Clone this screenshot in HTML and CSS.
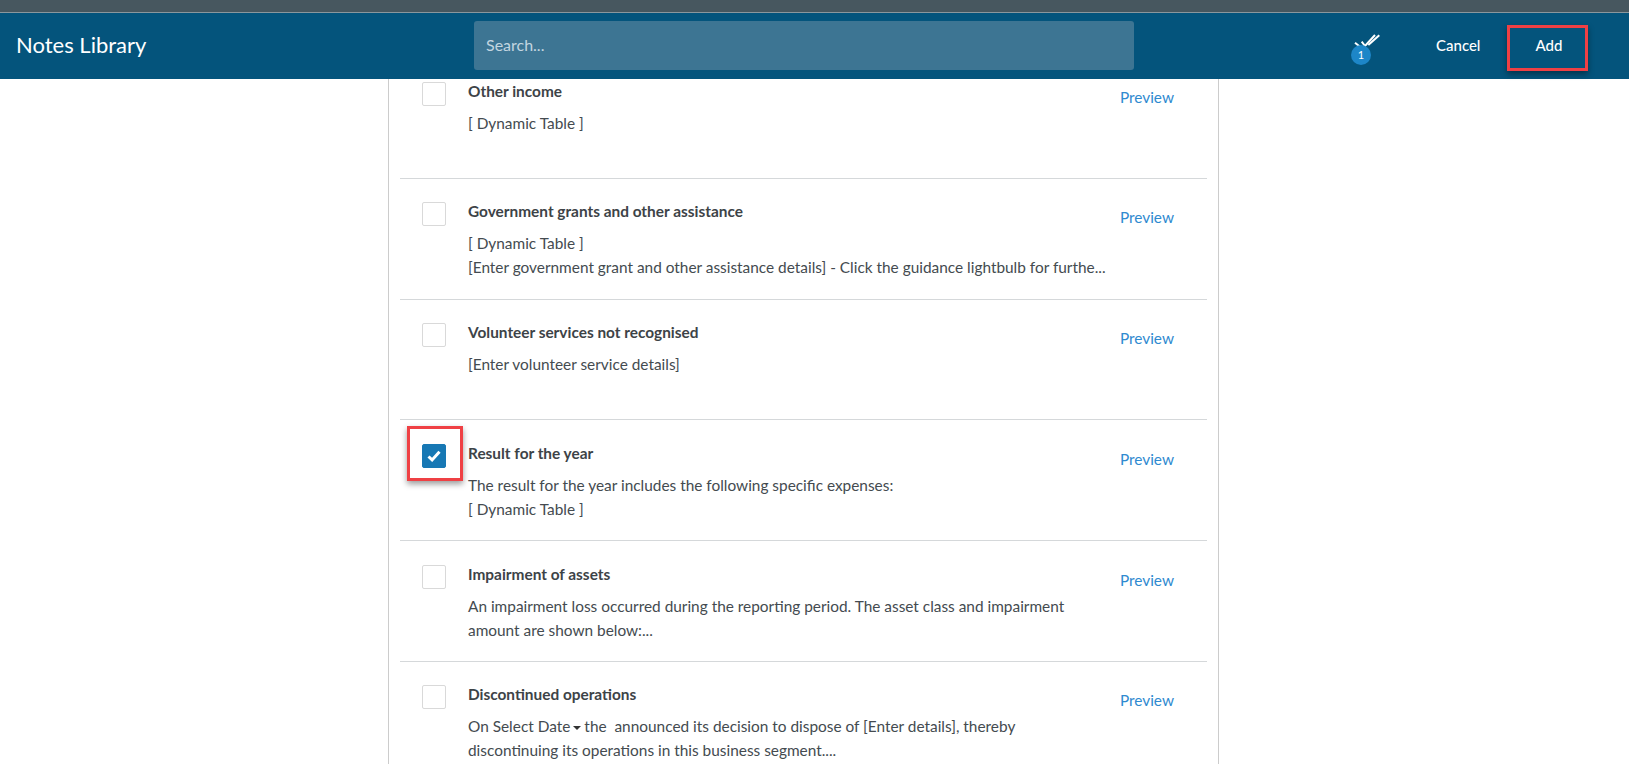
FILE: index.html
```html
<!DOCTYPE html>
<html lang="en">
<head>
  <meta charset="UTF-8">
  <title>Notes Library</title>
  <link rel="stylesheet" href="styles.css">
</head>
<body>

  <div class="top-strip"></div>

  <header class="app-bar">
    <div class="app-title">Notes Library</div>
    <div class="search-box">Search...</div>
    <div class="app-actions">
      <div class="selected-count">
        <svg class="double-check" width="28" height="20" viewBox="0 0 28 20" fill="none" stroke="#fff" stroke-width="2">
          <path d="M1 9.7l5 4"/>
          <path d="M7.7 8.7L11 13 21 2"/>
          <path d="M14.3 12L25.3 2.3"/>
        </svg>
        <span class="count-badge">1</span>
      </div>
      <a class="bar-link cancel-link">Cancel</a>
      <a class="bar-link add-link">Add</a>
    </div>
  </header>

  <main class="content">
    <div class="notes-panel">

      <div class="note-row">
        <span class="checkbox"></span>
        <div class="note-body">
          <div class="note-title">Other income</div>
          <div class="note-text">[ Dynamic Table ]</div>
        </div>
        <a class="preview-link">Preview</a>
      </div>

      <div class="note-row">
        <span class="checkbox"></span>
        <div class="note-body">
          <div class="note-title">Government grants and other assistance</div>
          <div class="note-text">[ Dynamic Table ]<br>[Enter government grant and other assistance details] - Click the guidance lightbulb for furthe...</div>
        </div>
        <a class="preview-link">Preview</a>
      </div>

      <div class="note-row">
        <span class="checkbox"></span>
        <div class="note-body">
          <div class="note-title">Volunteer services not recognised</div>
          <div class="note-text">[Enter volunteer service details]</div>
        </div>
        <a class="preview-link">Preview</a>
      </div>

      <div class="note-row">
        <span class="checkbox checked">
          <svg width="14" height="12" viewBox="0 0 14 12" fill="none" stroke="#fff" stroke-width="3">
            <path d="M1.5 6.5l3.6 3.4L12.5 1.8"/>
          </svg>
        </span>
        <span class="callout callout-check"></span>
        <div class="note-body">
          <div class="note-title">Result for the year</div>
          <div class="note-text">The result for the year includes the following specific expenses:<br>[ Dynamic Table ]</div>
        </div>
        <a class="preview-link">Preview</a>
      </div>

      <div class="note-row">
        <span class="checkbox"></span>
        <div class="note-body">
          <div class="note-title">Impairment of assets</div>
          <div class="note-text">An impairment loss occurred during the reporting period. The asset class and impairment<br>amount are shown below:...</div>
        </div>
        <a class="preview-link">Preview</a>
      </div>

      <div class="note-row">
        <span class="checkbox"></span>
        <div class="note-body">
          <div class="note-title">Discontinued operations</div>
          <div class="note-text">On Select Date<span class="caret"></span>the &nbsp;announced its decision to dispose of [Enter details], thereby<br>discontinuing its operations in this business segment....</div>
        </div>
        <a class="preview-link">Preview</a>
      </div>

    </div>
  </main>

</body>
</html>
```

FILE: styles.css
```css
html, body {
  height: 100%;
}

body {
  margin: 0;
  height: 100vh;
  overflow: hidden;
  display: flex;
  flex-direction: column;
  font-family: 'Lato', sans-serif;
  background: #fff;
  color: #444b50;
}

.top-strip {
  flex: none;
  height: 12px;
  background: #47575f;
  border-bottom: 1px solid #8b979d;
}

.app-bar {
  flex: none;
  position: relative;
  z-index: 2;
  height: 66px;
  display: flex;
  align-items: center;
  padding-left: 16px;
  background: #04547c;
  color: #fff;
}

.app-title {
  width: 458px;
  margin-top: -4px;
  font-size: 22px;
}

.search-box {
  width: 648px;
  height: 47px;
  margin-top: -1px;
  padding: 0 0 2px 12px;
  display: flex;
  align-items: center;
  border-radius: 3px;
  background: #3d7593;
  color: #c3d6e0;
  font-size: 16px;
}

.app-actions {
  flex: 1;
  display: flex;
  align-items: center;
  padding-left: 220px;
}

.selected-count {
  position: relative;
  width: 28px;
  height: 20px;
  margin-top: -6px;
}

.double-check {
  display: block;
}

.count-badge {
  position: absolute;
  left: -3px;
  top: 12px;
  width: 20px;
  height: 20px;
  border-radius: 50%;
  background: #1d86c8;
  font-size: 11px;
  line-height: 20px;
  text-align: center;
}

.bar-link {
  margin-bottom: 3px;
  font-size: 15px;
  font-weight: 500;
  color: #fff;
}

.cancel-link {
  margin-left: 54px;
}

.add-link {
  position: relative;
  margin-left: 55px;
}

/* red box drawn on top of the screenshot */
.add-link::after {
  content: "";
  position: absolute;
  left: -28px;
  top: -11px;
  width: 75px;
  height: 40px;
  border: 3px solid #ef4044;
  box-shadow: 0 3px 6px rgba(0, 0, 0, 0.4);
}

.content {
  flex: 1;
  overflow: hidden;
}

.notes-panel {
  width: 807px;
  margin: -21px 0 0 388px;
  padding: 0 11px;
  border-left: 1px solid #ccc;
  border-right: 1px solid #ccc;
}

.note-row {
  position: relative;
  height: 119.75px;
  display: flex;
  padding: 0 33px 0 22px;
  border-bottom: 1px solid #d5d8da;
}

.checkbox {
  flex: none;
  width: 22px;
  height: 22px;
  margin-top: 23.5px;
  display: flex;
  align-items: center;
  justify-content: center;
  border: 1px solid #d9d9d9;
  border-radius: 2px;
  background: #fff;
}

.checkbox.checked {
  border-color: #1778b4;
  background: #1778b4;
}

.callout-check {
  position: absolute;
  left: 7px;
  top: 5.5px;
  width: 50px;
  height: 49px;
  border: 3px solid #ef4044;
  box-shadow: 0 3px 6px rgba(0, 0, 0, 0.4);
}

.note-body {
  flex: 1;
  margin-left: 22px;
  padding-top: 20.5px;
}

.note-title {
  font-size: 15.4px;
  font-weight: 700;
  line-height: 24px;
  color: #3d4347;
}

.note-text {
  margin-top: 8px;
  font-size: 15.4px;
  line-height: 24px;
}

.caret {
  display: inline-block;
  margin: 0 3px 2px 3px;
  border-top: 4px solid #333;
  border-left: 4px solid transparent;
  border-right: 4px solid transparent;
}

.preview-link {
  margin-top: 26.5px;
  font-size: 15.4px;
  line-height: 24px;
  color: #2f8ad0;
}
```
